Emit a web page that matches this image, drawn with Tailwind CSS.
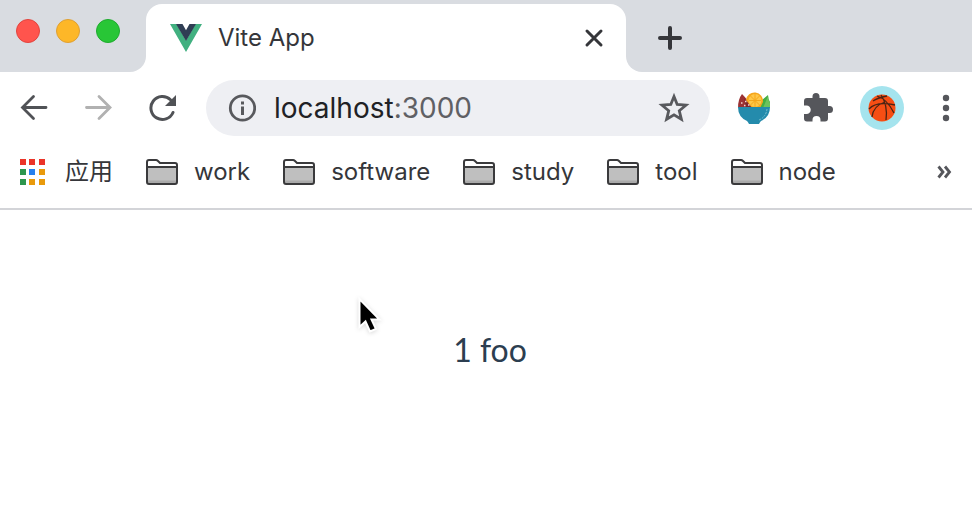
<!DOCTYPE html>
<html lang="zh-CN">
<head>
<meta charset="utf-8">
<meta name="viewport" content="width=device-width, initial-scale=1">
<title>Vite App</title>
<script src="https://cdn.jsdelivr.net/npm/@tailwindcss/browser@4"></script>
</head>
<body class="flex min-h-screen flex-col bg-white font-['Inter','Noto_Sans_CJK_SC',sans-serif] text-[#35363a]">
<svg class="hidden" aria-hidden="true">
  <symbol id="folder" viewBox="0 0 32 26">
    <path d="M1 23V3q0-2 2-2h7q1 0 2 1l2 2h15q2 0 2 2v17q0 2-2 2H3q-2 0-2-2z" fill="#fff"/>
    <path d="M1 8.500h30V24H1z" fill="#bfbfbf"/>
    <path d="M1 21.500h30V24H1z" fill="#aaa"/>
    <path d="M1 23V3q0-2 2-2h7q1 0 2 1l2 2h15q2 0 2 2v17q0 2-2 2H3q-2 0-2-2zM1 8h30" fill="none" stroke="#3a3a3c" stroke-width="2"/>
  </symbol>
</svg>
<header>
  <div class="flex h-[72px]">
    <div class="flex w-[146px] items-start gap-4 rounded-br-2xl bg-[#d9dce1] pt-[19px] pl-4">
      <button aria-label="Close window" class="size-6 rounded-full border border-[#e2443e] bg-[#ff544d]"></button>
      <button aria-label="Minimize window" class="size-6 rounded-full border border-[#dfa033] bg-[#fdb728]"></button>
      <button aria-label="Zoom window" class="size-6 rounded-full border border-[#1eab2e] bg-[#28c636]"></button>
    </div>
    <div class="w-[480px] min-w-0 bg-[#d9dce1] pt-1">
      <div class="flex h-full items-center rounded-t-2xl bg-white pr-5 pl-6">
        <svg class="h-7 w-8 shrink-0" viewBox="0 0 32 28"><path d="M0 0h6.500L16 16.500 25.500 0H32L16 28z" fill="#41b080"/><path d="M6 0h6.500L16 6.200 19.500 0H26L16 17z" fill="#2f3e54"/></svg>
        <span class="ml-4 grow text-2xl">Vite App</span>
        <button aria-label="Close tab" class="size-6"><svg viewBox="0 0 24 24" fill="none" stroke="#35363a" stroke-width="3" stroke-linecap="round"><path d="M5 5l14 14M19 5L5 19"/></svg></button>
      </div>
    </div>
    <div class="flex grow items-center rounded-bl-2xl bg-[#d9dce1] pt-1 pl-8">
      <button aria-label="New tab" class="size-6"><svg viewBox="0 0 24 24" fill="none" stroke="#35363a" stroke-width="4" stroke-linecap="round"><path d="M12 2v20M2 12h20"/></svg></button>
    </div>
  </div>

  <div class="flex h-[72px] items-center pr-3 pl-5">
    <button aria-label="Back" class="size-7"><svg viewBox="0 0 28 28" fill="none" stroke="#505256" stroke-width="2.800" stroke-linecap="round"><path d="M13.500 2.500L2.500 13.500l11 11M3 13.500h23"/></svg></button>
    <button aria-label="Forward" disabled class="ml-9 size-7"><svg viewBox="0 0 28 28" fill="none" stroke="#b1b1b1" stroke-width="2.800" stroke-linecap="round"><path d="M15 2.500l11 11-11 11M25 13.500H2.500"/></svg></button>
    <button aria-label="Reload" class="ml-9 size-7"><svg viewBox="0 0 28 28"><path d="M25 18.500A11.500 11.500 0 1 1 22.500 5.800" fill="none" stroke="#505256" stroke-width="3" stroke-linecap="round"/><path d="M28 1v11H17z" fill="#505256"/></svg></button>
    <div class="ml-[30px] flex h-14 min-w-0 grow items-center rounded-full bg-[#eeeff3] pr-5 pl-[22px]">
      <button aria-label="Site information" class="size-7"><svg viewBox="0 0 28 28"><circle cx="14.500" cy="14" r="12.200" fill="none" stroke="#58595d" stroke-width="2.800"/><path d="M13 7.500h3v3h-3zM13 12.500h3V21h-3z" fill="#58595d"/></svg></button>
      <a href="http://localhost:3000" class="ml-[18px] grow text-[28px] text-[#5f6064]"><span class="text-[#202125]">localhost</span>:3000</a>
      <button aria-label="Bookmark this page" class="size-8"><svg viewBox="0 0 32 32" fill="none" stroke="#58595d" stroke-width="2.800"><path d="M16 4.500l3.200 8 8.800.7-6.700 5.600 2.100 8.500L16 22.800l-7.400 4.500 2.100-8.500L4 13.200l8.800-.7z"/></svg></button>
    </div>
    <button aria-label="Salad extension" class="ml-7 size-8">
      <svg viewBox="0 0 32 32"><path d="M0 16Q0 7 4 2l13 14z" fill="#9b3234"/><path d="M21 16l3-8 6-5q0 4 2 7v6z" fill="#43ae43"/><path d="M25 16l5-12q0 4 2 7v5z" fill="#6cc35c"/><path d="M6 6l8 10H8z" fill="#7e292d"/><path d="M8 8a8.500 8.500 0 1 1 17 2l-3 6h-8z" fill="#f6a61b"/><circle cx="17" cy="8.500" r="6.500" fill="#ffc747"/><path d="M17 2v13M11 8.500h12M12.500 4l9 9M21.500 4l-9 9" stroke="#f6a61b"/><path d="M3 11h1.500M7 9.500h1.500M6 13.500h1.500M10 13h1.500" stroke="#f6d5ce" stroke-width="1.500"/><path d="M0 15h32q0 10-9 14-1 1-2 3H11q-1-2-2-3Q0 25 0 15z" fill="#248bac"/><path d="M29 17q-1 8-8 11" fill="none" stroke="#77c0d0" stroke-dasharray="2 1"/></svg>
    </button>
    <button aria-label="Extensions" class="ml-8 size-8">
      <svg viewBox="0 0 32 32" fill="#55565b"><path d="M5 6h5.500V4.500a3.500 3.500 0 0 1 7 0V6H23q3 0 3 3v5h1.500a3.500 3.500 0 0 1 0 7H26v5.500q0 3-3 3h-4.500V28a4 4 0 0 0-8 0v1.500H5q-3 0-3-3V22h2.500a4 4 0 0 0 0-8.500H2V9q0-3 3-3z"/></svg>
    </button>
    <button aria-label="Profile" class="ml-[26px] flex size-11 items-center justify-center rounded-full bg-[#a5e4ee]">
      <svg class="size-7" viewBox="0 0 28 28"><circle cx="14" cy="14" r="13.500" fill="#f64e14"/><path d="M1 15Q8 7 27 11M9 2q10 3 17 17M13 1q7 10 5 25M19 2Q9 4 5 7M17 8Q5 12 4 23" fill="none" stroke="#4a2414" stroke-width="1.300"/></svg>
    </button>
    <button aria-label="Menu" class="ml-7 h-8 w-7"><svg viewBox="0 0 28 32" fill="#55565b"><circle cx="14" cy="6" r="3.200"/><circle cx="14" cy="16" r="3.200"/><circle cx="14" cy="26" r="3.200"/></svg></button>
  </div>

  <nav aria-label="Bookmarks" class="flex h-[66px] items-center gap-[33px] border-b-2 border-[#d3d4d8] pr-5 pb-2 pl-[19px] text-2xl">
    <a href="#" class="flex items-center gap-5">
      <svg class="size-[26px]" viewBox="0 0 26 26"><path d="M1 0h6v6H1zM10 0h6v6h-6zM20 0h6v6h-6z" fill="#eb3428"/><path d="M1 10h6v6H1zM1 20h6v6H1z" fill="#2d964e"/><path d="M10 10h6v6h-6z" fill="#2680ee"/><path d="M20 10h6v6h-6zM10 20h6v6h-6zM20 20h6v6h-6z" fill="#e99a0c"/></svg>
      <span>应用</span>
    </a>
    <a href="#" class="flex items-center gap-4"><svg class="h-[26px] w-8"><use href="#folder"/></svg>work</a>
    <a href="#" class="flex items-center gap-4"><svg class="h-[26px] w-8"><use href="#folder"/></svg>software</a>
    <a href="#" class="flex items-center gap-4"><svg class="h-[26px] w-8"><use href="#folder"/></svg>study</a>
    <a href="#" class="flex items-center gap-4"><svg class="h-[26px] w-8"><use href="#folder"/></svg>tool</a>
    <a href="#" class="flex items-center gap-4"><svg class="h-[26px] w-8"><use href="#folder"/></svg>node</a>
    <button aria-label="More bookmarks" class="ml-auto size-4"><svg viewBox="0 0 16 16" fill="none" stroke="#55565b" stroke-width="2.800"><path d="M2.500 2.500L7 8l-4.500 5.500M9 2.500L13.500 8 9 13.500"/></svg></button>
  </nav>
</header>
<main class="relative grow pt-[118px] pl-2 text-center font-['Lato',sans-serif] text-[32px] leading-[44px] text-[#2c3e50]">
  <p>1 foo</p>
  <svg class="absolute top-[84px] left-[353px] h-[42px] w-8 drop-shadow-sm" viewBox="0 0 32 42" aria-hidden="true"><path d="M6.500 5v28l6-5.500 4.500 10 6-2.500-4.500-9.500h8z" fill="#000" stroke="#fff" stroke-width="2"/></svg>
</main>
</body>
</html>
